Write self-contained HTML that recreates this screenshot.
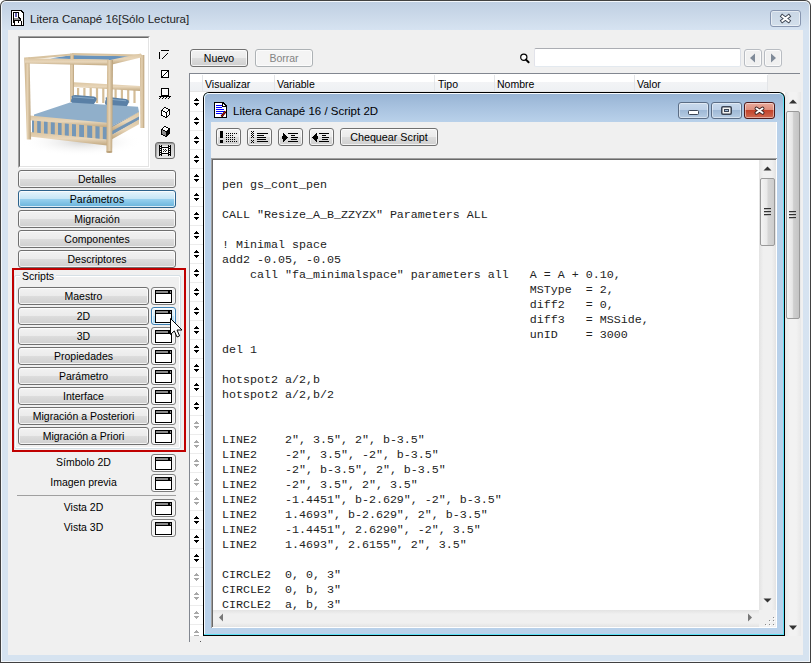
<!DOCTYPE html><html><head><meta charset="utf-8"><style>html,body{margin:0;padding:0;}body{width:811px;height:663px;position:relative;overflow:hidden;background:#fff;font-family:"Liberation Sans", sans-serif;}.code{font-family:"Liberation Mono", monospace;}</style></head><body>
<div style="position:absolute;left:0px;top:0px;width:811px;height:663px;background:#414141;border-radius:6px 6px 0 0;"></div>
<div style="position:absolute;left:1px;top:1px;width:809px;height:661px;background:#f3f7fb;border-radius:5px 5px 0 0;"></div>
<div style="position:absolute;left:2px;top:2px;width:807px;height:659px;background:linear-gradient(#bfcfe2 0px,#cbd9e9 14px,#d6e3f1 28px,#d6e3f0 100%);border-radius:4px 4px 0 0;"></div>
<div style="position:absolute;left:8px;top:30px;width:795px;height:625px;background:#f0f0f0;"></div>
<svg style="position:absolute;left:11px;top:10px" width="13" height="16" viewBox="0 0 13 16" shape-rendering="crispEdges"><rect x="0" y="0" width="11" height="1" fill="#000"/><rect x="0" y="1" width="1" height="1" fill="#000"/><rect x="1" y="1" width="9" height="1" fill="#fff"/><rect x="10" y="1" width="2" height="1" fill="#000"/><rect x="0" y="2" width="1" height="1" fill="#000"/><rect x="1" y="2" width="1" height="1" fill="#fff"/><rect x="2" y="2" width="6" height="1" fill="#000"/><rect x="8" y="2" width="3" height="1" fill="#fff"/><rect x="11" y="2" width="2" height="1" fill="#000"/><rect x="0" y="3" width="1" height="1" fill="#000"/><rect x="1" y="3" width="1" height="1" fill="#fff"/><rect x="2" y="3" width="1" height="1" fill="#000"/><rect x="3" y="3" width="1" height="1" fill="#fff"/><rect x="4" y="3" width="2" height="1" fill="#6464b4"/><rect x="6" y="3" width="1" height="1" fill="#fff"/><rect x="7" y="3" width="1" height="1" fill="#000"/><rect x="8" y="3" width="4" height="1" fill="#fff"/><rect x="12" y="3" width="1" height="1" fill="#000"/><rect x="0" y="4" width="1" height="1" fill="#000"/><rect x="1" y="4" width="1" height="1" fill="#fff"/><rect x="2" y="4" width="1" height="1" fill="#000"/><rect x="3" y="4" width="1" height="1" fill="#fff"/><rect x="4" y="4" width="2" height="1" fill="#6464b4"/><rect x="6" y="4" width="1" height="1" fill="#fff"/><rect x="7" y="4" width="1" height="1" fill="#000"/><rect x="8" y="4" width="4" height="1" fill="#fff"/><rect x="12" y="4" width="1" height="1" fill="#000"/><rect x="0" y="5" width="1" height="1" fill="#000"/><rect x="1" y="5" width="1" height="1" fill="#fff"/><rect x="2" y="5" width="1" height="1" fill="#000"/><rect x="3" y="5" width="1" height="1" fill="#fff"/><rect x="4" y="5" width="2" height="1" fill="#6464b4"/><rect x="6" y="5" width="1" height="1" fill="#fff"/><rect x="7" y="5" width="1" height="1" fill="#000"/><rect x="8" y="5" width="4" height="1" fill="#fff"/><rect x="12" y="5" width="1" height="1" fill="#000"/><rect x="0" y="6" width="1" height="1" fill="#000"/><rect x="1" y="6" width="1" height="1" fill="#fff"/><rect x="2" y="6" width="1" height="1" fill="#000"/><rect x="3" y="6" width="1" height="1" fill="#fff"/><rect x="4" y="6" width="2" height="1" fill="#6464b4"/><rect x="6" y="6" width="1" height="1" fill="#fff"/><rect x="7" y="6" width="1" height="1" fill="#000"/><rect x="8" y="6" width="4" height="1" fill="#fff"/><rect x="12" y="6" width="1" height="1" fill="#000"/><rect x="0" y="7" width="1" height="1" fill="#000"/><rect x="1" y="7" width="1" height="1" fill="#fff"/><rect x="2" y="7" width="1" height="1" fill="#000"/><rect x="3" y="7" width="4" height="1" fill="#fff"/><rect x="7" y="7" width="2" height="1" fill="#000"/><rect x="9" y="7" width="3" height="1" fill="#fff"/><rect x="12" y="7" width="1" height="1" fill="#000"/><rect x="0" y="8" width="1" height="1" fill="#000"/><rect x="1" y="8" width="1" height="1" fill="#fff"/><rect x="2" y="8" width="1" height="1" fill="#000"/><rect x="3" y="8" width="5" height="1" fill="#8c8c8c"/><rect x="8" y="8" width="2" height="1" fill="#000"/><rect x="10" y="8" width="2" height="1" fill="#fff"/><rect x="12" y="8" width="1" height="1" fill="#000"/><rect x="0" y="9" width="1" height="1" fill="#000"/><rect x="1" y="9" width="1" height="1" fill="#fff"/><rect x="2" y="9" width="1" height="1" fill="#000"/><rect x="3" y="9" width="6" height="1" fill="#8c8c8c"/><rect x="9" y="9" width="1" height="1" fill="#000"/><rect x="10" y="9" width="2" height="1" fill="#fff"/><rect x="12" y="9" width="1" height="1" fill="#000"/><rect x="0" y="10" width="1" height="1" fill="#000"/><rect x="1" y="10" width="1" height="1" fill="#fff"/><rect x="2" y="10" width="8" height="1" fill="#000"/><rect x="10" y="10" width="2" height="1" fill="#fff"/><rect x="12" y="10" width="1" height="1" fill="#000"/><rect x="0" y="11" width="1" height="1" fill="#000"/><rect x="1" y="11" width="1" height="1" fill="#fff"/><rect x="2" y="11" width="2" height="1" fill="#000"/><rect x="4" y="11" width="3" height="1" fill="#fff"/><rect x="7" y="11" width="1" height="1" fill="#000"/><rect x="8" y="11" width="2" height="1" fill="#fff"/><rect x="10" y="11" width="1" height="1" fill="#000"/><rect x="11" y="11" width="1" height="1" fill="#fff"/><rect x="12" y="11" width="1" height="1" fill="#000"/><rect x="0" y="12" width="1" height="1" fill="#000"/><rect x="1" y="12" width="1" height="1" fill="#fff"/><rect x="2" y="12" width="2" height="1" fill="#000"/><rect x="4" y="12" width="3" height="1" fill="#fff"/><rect x="7" y="12" width="1" height="1" fill="#000"/><rect x="8" y="12" width="2" height="1" fill="#fff"/><rect x="10" y="12" width="1" height="1" fill="#000"/><rect x="11" y="12" width="1" height="1" fill="#fff"/><rect x="12" y="12" width="1" height="1" fill="#000"/><rect x="0" y="13" width="1" height="1" fill="#000"/><rect x="1" y="13" width="2" height="1" fill="#fff"/><rect x="3" y="13" width="1" height="1" fill="#000"/><rect x="4" y="13" width="6" height="1" fill="#fff"/><rect x="10" y="13" width="1" height="1" fill="#000"/><rect x="11" y="13" width="1" height="1" fill="#fff"/><rect x="12" y="13" width="1" height="1" fill="#000"/><rect x="0" y="14" width="1" height="1" fill="#000"/><rect x="1" y="14" width="2" height="1" fill="#fff"/><rect x="3" y="14" width="1" height="1" fill="#000"/><rect x="4" y="14" width="6" height="1" fill="#fff"/><rect x="10" y="14" width="1" height="1" fill="#000"/><rect x="11" y="14" width="1" height="1" fill="#fff"/><rect x="12" y="14" width="1" height="1" fill="#000"/><rect x="0" y="15" width="13" height="1" fill="#000"/><rect x="10" y="2" width="1" height="1" fill="#fff"/></svg>
<div style="position:absolute;left:30px;top:14px;font-size:11.5px;line-height:1;white-space:pre;color:#1e1e1e;">Litera Canapé 16[Sólo Lectura]</div>
<div style="position:absolute;left:770px;top:10px;width:31px;height:17px;box-sizing:border-box;border:1px solid #8796b0;border-radius:3px;background:linear-gradient(#c9d6e5,#d3dfeb);box-shadow:inset 0 0 0 1px rgba(255,255,255,0.5);"></div>
<svg style="position:absolute;left:779px;top:13px" width="13" height="11" viewBox="0 0 13 11"><path d="M3.4 3.2L9.6 7.9M9.6 3.2L3.4 7.9" stroke="#3a4250" stroke-width="3.8" fill="none" stroke-linecap="square"/><path d="M3.4 3.2L9.6 7.9M9.6 3.2L3.4 7.9" stroke="#fff" stroke-width="2" fill="none" stroke-linecap="square"/></svg>
<div style="position:absolute;left:18px;top:36px;width:132px;height:132px;box-sizing:border-box;border-style:solid;border-width:1px;border-color:#a0a0a0 #fff #fff #a0a0a0;"></div>
<div style="position:absolute;left:19px;top:37px;width:130px;height:130px;box-sizing:border-box;border-style:solid;border-width:1px;border-color:#696969 #e3e3e3 #e3e3e3 #696969;background:#fff;"></div>
<div style="position:absolute;left:20px;top:38px;width:128px;height:128px;overflow:hidden"><svg width="128" height="128" viewBox="0 0 128 128">
<defs>
<linearGradient id="wv" x1="0" x2="1" y1="0" y2="0"><stop offset="0" stop-color="#c8ae86"/><stop offset="0.45" stop-color="#e6d3b4"/><stop offset="1" stop-color="#b89f78"/></linearGradient>
<linearGradient id="wh" x1="0" x2="0" y1="0" y2="1"><stop offset="0" stop-color="#dcc6a2"/><stop offset="0.5" stop-color="#e8d6ba"/><stop offset="1" stop-color="#c0a77f"/></linearGradient>
<radialGradient id="sh" cx="0.5" cy="0.5" r="0.5"><stop offset="0" stop-color="#d6d6d6"/><stop offset="1" stop-color="#ffffff" stop-opacity="0"/></radialGradient>
</defs>
<ellipse cx="62" cy="104" rx="60" ry="14" fill="url(#sh)"/>
<!-- canopy -->
<path d="M30 20.5L52 17L118 18.5L100 22.5L89 22Z" fill="#6893bc"/>
<!-- back posts -->
<path d="M50.2 15.5H54V64H50.2Z" fill="url(#wv)"/>
<!-- headboard slats -->
<g fill="#d4bd98">
<rect x="57" y="50" width="2.2" height="15"/><rect x="63.3" y="50" width="2.2" height="15"/><rect x="69.6" y="50" width="2.2" height="15"/><rect x="75.9" y="50" width="2.2" height="15"/><rect x="82.2" y="50" width="2.2" height="15"/><rect x="94.5" y="50" width="2.2" height="15"/><rect x="100.8" y="50" width="2.2" height="15"/><rect x="107.1" y="50" width="2.2" height="15"/><rect x="113.4" y="50" width="2.2" height="15"/>
</g>
<!-- headboard rail -->
<path d="M54 44.3L120 48V53L54 49Z" fill="url(#wh)"/>
<!-- back right post -->
<path d="M120 17H124.3V90H120.5Z" fill="url(#wv)"/>
<!-- left side top rail -->
<path d="M6 19.5L52 15.5V17.5L8 21.5Z" fill="#d8c3a0"/>
<!-- top back rail & right rail -->
<path d="M52 15L122 16.5V18.5L52 17.3Z" fill="#d8c3a0"/>
<path d="M90 22L121 15.5V19.5L92 26.5Z" fill="url(#wh)"/>
<!-- pillows -->
<path d="M52 60Q50 57.5 55 57L74 58.5Q78 59.5 76 63L73 67.5L53 65.5Q49.5 64 52 60Z" fill="#5a80a6"/>
<path d="M86 61Q84 59 89 59L106 61Q110 62 108.5 65L106 70L87 68Q83.5 66 86 61Z" fill="#5a80a6"/>
<path d="M53 59L74 60.5" stroke="#86a9c8" stroke-width="1"/>
<path d="M87 61L106 62.8" stroke="#86a9c8" stroke-width="1"/>
<!-- mattress top -->
<path d="M14 76.5L50 64.5L118 68.8L119 74L92 88L14 80Z" fill="#90afca"/>
<!-- mattress front side (seen through slats) -->
<path d="M12 81L87 88V102L12 95Z" fill="#7497b8"/>
<!-- mattress right side -->
<path d="M92 88L119 74V82L92 97Z" fill="#7294b5"/>
<!-- footboard slats -->
<g fill="#d9c29e">
<rect x="14" y="80" width="3.2" height="16"/><rect x="20.8" y="80.5" width="3.2" height="16.5"/><rect x="27.6" y="81.2" width="3.2" height="16.5"/><rect x="34.8" y="82" width="3.2" height="17"/><rect x="41.6" y="82.6" width="3.2" height="17"/><rect x="48.8" y="83.3" width="3.2" height="17"/><rect x="56" y="84" width="3.2" height="17.5"/><rect x="64" y="84.8" width="3.2" height="17.5"/><rect x="72.2" y="85.6" width="3.2" height="17.5"/><rect x="79.6" y="86.3" width="3.2" height="17.5"/>
</g>
<!-- footboard rails -->
<path d="M9.5 77.5L87 84.8V89.3L9.5 82.3Z" fill="url(#wh)"/>
<path d="M9.5 94L87 101.6V107.4L9.5 98.5Z" fill="url(#wh)"/>
<!-- right side rails -->
<path d="M92 89L119 74V78.5L92 93Z" fill="url(#wh)"/>
<path d="M92 96.8L119 81.4V86.2L92 101.2Z" fill="url(#wh)"/>
<!-- front left post -->
<path d="M4.3 19.5H9.6L11.1 101.6H6.8Z" fill="url(#wv)"/>
<!-- top front rail -->
<path d="M5 20.3L89 21.5V27.5L5 25.6Z" fill="url(#wh)"/>
<!-- front right post -->
<path d="M87.2 22H93L92.2 114.2H86.4Z" fill="url(#wv)"/>
<ellipse cx="89.3" cy="114" rx="3" ry="1" fill="#b89f78"/>
</svg>
</div>
<svg style="position:absolute;left:155px;top:44px" width="20" height="60" viewBox="0 0 20 60" shape-rendering="crispEdges"><rect x="6" y="44" width="8" height="8" fill="#fff"/><rect x="6" y="26" width="8" height="8" fill="#fff"/><rect x="6" y="6" width="8" height="1" fill="#000"/><rect x="4" y="8" width="1" height="7" fill="#000"/><rect x="7" y="14" width="1" height="1" fill="#000"/><rect x="8" y="13" width="1" height="1" fill="#000"/><rect x="9" y="12" width="1" height="1" fill="#000"/><rect x="10" y="11" width="1" height="1" fill="#000"/><rect x="11" y="10" width="1" height="1" fill="#000"/><rect x="12" y="9" width="1" height="1" fill="#000"/><rect x="6" y="26" width="8" height="1" fill="#000"/><rect x="6" y="33" width="8" height="1" fill="#000"/><rect x="6" y="26" width="1" height="8" fill="#000"/><rect x="13" y="26" width="1" height="8" fill="#000"/><rect x="7" y="32" width="1" height="1" fill="#000"/><rect x="8" y="31" width="1" height="1" fill="#000"/><rect x="9" y="30" width="1" height="1" fill="#000"/><rect x="10" y="29" width="1" height="1" fill="#000"/><rect x="11" y="28" width="1" height="1" fill="#000"/><rect x="12" y="27" width="1" height="1" fill="#000"/><rect x="6" y="44" width="8" height="1" fill="#000"/><rect x="6" y="51" width="8" height="1" fill="#000"/><rect x="6" y="44" width="1" height="8" fill="#000"/><rect x="13" y="44" width="1" height="8" fill="#000"/><rect x="4" y="52" width="12" height="1" fill="#000"/><rect x="5" y="53" width="1" height="1" fill="#000"/><rect x="4" y="54" width="1" height="1" fill="#000"/><rect x="8" y="53" width="1" height="1" fill="#000"/><rect x="7" y="54" width="1" height="1" fill="#000"/><rect x="11" y="53" width="1" height="1" fill="#000"/><rect x="10" y="54" width="1" height="1" fill="#000"/><rect x="14" y="53" width="1" height="1" fill="#000"/><rect x="13" y="54" width="1" height="1" fill="#000"/></svg>
<svg style="position:absolute;left:161px;top:107px" width="9" height="11" viewBox="0 0 9 11" shape-rendering="crispEdges"><rect x="3" y="0" width="2" height="1" fill="#000"/><rect x="2" y="1" width="1" height="1" fill="#000"/><rect x="3" y="1" width="2" height="1" fill="#fff"/><rect x="5" y="1" width="2" height="1" fill="#000"/><rect x="1" y="2" width="1" height="1" fill="#000"/><rect x="2" y="2" width="5" height="1" fill="#fff"/><rect x="7" y="2" width="2" height="1" fill="#000"/><rect x="0" y="3" width="2" height="1" fill="#000"/><rect x="2" y="3" width="5" height="1" fill="#fff"/><rect x="7" y="3" width="2" height="1" fill="#000"/><rect x="0" y="4" width="1" height="1" fill="#000"/><rect x="1" y="4" width="1" height="1" fill="#fff"/><rect x="2" y="4" width="2" height="1" fill="#000"/><rect x="4" y="4" width="2" height="1" fill="#fff"/><rect x="6" y="4" width="1" height="1" fill="#000"/><rect x="7" y="4" width="1" height="1" fill="#fff"/><rect x="8" y="4" width="1" height="1" fill="#000"/><rect x="0" y="5" width="1" height="1" fill="#000"/><rect x="1" y="5" width="3" height="1" fill="#fff"/><rect x="4" y="5" width="2" height="1" fill="#000"/><rect x="6" y="5" width="2" height="1" fill="#fff"/><rect x="8" y="5" width="1" height="1" fill="#000"/><rect x="0" y="6" width="1" height="1" fill="#000"/><rect x="1" y="6" width="4" height="1" fill="#fff"/><rect x="5" y="6" width="1" height="1" fill="#000"/><rect x="6" y="6" width="2" height="1" fill="#fff"/><rect x="8" y="6" width="1" height="1" fill="#000"/><rect x="0" y="7" width="1" height="1" fill="#000"/><rect x="1" y="7" width="4" height="1" fill="#fff"/><rect x="5" y="7" width="1" height="1" fill="#000"/><rect x="6" y="7" width="2" height="1" fill="#fff"/><rect x="8" y="7" width="1" height="1" fill="#000"/><rect x="0" y="8" width="2" height="1" fill="#000"/><rect x="2" y="8" width="3" height="1" fill="#fff"/><rect x="5" y="8" width="1" height="1" fill="#000"/><rect x="6" y="8" width="1" height="1" fill="#fff"/><rect x="7" y="8" width="1" height="1" fill="#000"/><rect x="2" y="9" width="2" height="1" fill="#000"/><rect x="4" y="9" width="1" height="1" fill="#fff"/><rect x="5" y="9" width="2" height="1" fill="#000"/><rect x="4" y="10" width="2" height="1" fill="#000"/></svg>
<svg style="position:absolute;left:161px;top:126px" width="9" height="11" viewBox="0 0 9 11" shape-rendering="crispEdges"><rect x="3" y="0" width="2" height="1" fill="#000"/><rect x="2" y="1" width="1" height="1" fill="#000"/><rect x="3" y="1" width="2" height="1" fill="#fff"/><rect x="5" y="1" width="2" height="1" fill="#000"/><rect x="1" y="2" width="1" height="1" fill="#000"/><rect x="2" y="2" width="5" height="1" fill="#fff"/><rect x="7" y="2" width="2" height="1" fill="#000"/><rect x="0" y="3" width="2" height="1" fill="#000"/><rect x="2" y="3" width="5" height="1" fill="#fff"/><rect x="7" y="3" width="2" height="1" fill="#000"/><rect x="0" y="4" width="1" height="1" fill="#000"/><rect x="1" y="4" width="1" height="1" fill="#8a8a8a"/><rect x="2" y="4" width="2" height="1" fill="#000"/><rect x="4" y="4" width="2" height="1" fill="#fff"/><rect x="6" y="4" width="3" height="1" fill="#000"/><rect x="0" y="5" width="1" height="1" fill="#000"/><rect x="1" y="5" width="3" height="1" fill="#8a8a8a"/><rect x="4" y="5" width="5" height="1" fill="#000"/><rect x="0" y="6" width="1" height="1" fill="#000"/><rect x="1" y="6" width="4" height="1" fill="#8a8a8a"/><rect x="5" y="6" width="4" height="1" fill="#000"/><rect x="0" y="7" width="1" height="1" fill="#000"/><rect x="1" y="7" width="4" height="1" fill="#8a8a8a"/><rect x="5" y="7" width="4" height="1" fill="#000"/><rect x="0" y="8" width="2" height="1" fill="#000"/><rect x="2" y="8" width="3" height="1" fill="#8a8a8a"/><rect x="5" y="8" width="3" height="1" fill="#000"/><rect x="2" y="9" width="2" height="1" fill="#000"/><rect x="4" y="9" width="1" height="1" fill="#8a8a8a"/><rect x="5" y="9" width="2" height="1" fill="#000"/><rect x="4" y="10" width="2" height="1" fill="#000"/></svg>
<div style="position:absolute;left:155px;top:142px;width:20px;height:17px;box-sizing:border-box;border:1px solid #6b6b6b;border-radius:3px;background:linear-gradient(#c8c8c8,#e6e6e6);box-shadow:inset 1px 1px 1px rgba(0,0,0,0.25);"></div>
<svg style="position:absolute;left:159px;top:145px" width="12" height="11" viewBox="0 0 12 11" shape-rendering="crispEdges"><rect x="0" y="0" width="3" height="11" fill="#000"/><rect x="9" y="0" width="3" height="11" fill="#000"/><rect x="1" y="2" width="1" height="1" fill="#fff"/><rect x="1" y="4" width="1" height="1" fill="#fff"/><rect x="1" y="6" width="1" height="1" fill="#fff"/><rect x="1" y="8" width="1" height="1" fill="#fff"/><rect x="10" y="2" width="1" height="1" fill="#fff"/><rect x="10" y="4" width="1" height="1" fill="#fff"/><rect x="10" y="6" width="1" height="1" fill="#fff"/><rect x="10" y="8" width="1" height="1" fill="#fff"/><rect x="1" y="0" width="1" height="1" fill="#ddd"/><rect x="10" y="0" width="1" height="1" fill="#ddd"/><rect x="1" y="10" width="1" height="1" fill="#ddd"/><rect x="10" y="10" width="1" height="1" fill="#ddd"/><rect x="3" y="1" width="6" height="1" fill="#f4f4f4"/><rect x="3" y="9" width="6" height="1" fill="#f4f4f4"/><rect x="3" y="2" width="6" height="1" fill="#000"/><rect x="3" y="8" width="6" height="1" fill="#000"/><rect x="3" y="3" width="6" height="5" fill="#fff"/><rect x="4" y="4" width="1" height="1" fill="#222"/><rect x="6" y="4" width="1" height="1" fill="#222"/><rect x="5" y="5" width="1" height="1" fill="#444"/><rect x="7" y="5" width="1" height="1" fill="#222"/><rect x="4" y="6" width="1" height="1" fill="#222"/><rect x="6" y="6" width="1" height="1" fill="#222"/></svg>
<div style="position:absolute;left:18px;top:170px;width:158px;height:18px;box-sizing:border-box;border:1px solid #707070;background:linear-gradient(#f2f2f2 0%,#ebebeb 50%,#dddddd 50%,#cfcfcf 100%);border-radius:3px;box-shadow:inset 0 0 0 1px rgba(255,255,255,0.75);"></div>
<div style="position:absolute;left:18px;top:174.25px;width:158px;text-align:center;font-size:10.5px;line-height:1;white-space:pre;color:#000;">Detalles</div>
<div style="position:absolute;left:18px;top:190px;width:158px;height:18px;box-sizing:border-box;border:1px solid #2c628b;background:linear-gradient(#e5f4fc 0%,#c4e5f6 50%,#98d1ef 50%,#68b3db 100%);border-radius:3px;box-shadow:inset 0 0 0 1px rgba(255,255,255,0.75);"></div>
<div style="position:absolute;left:18px;top:194.25px;width:158px;text-align:center;font-size:10.5px;line-height:1;white-space:pre;color:#000;">Parámetros</div>
<div style="position:absolute;left:18px;top:210px;width:158px;height:18px;box-sizing:border-box;border:1px solid #707070;background:linear-gradient(#f2f2f2 0%,#ebebeb 50%,#dddddd 50%,#cfcfcf 100%);border-radius:3px;box-shadow:inset 0 0 0 1px rgba(255,255,255,0.75);"></div>
<div style="position:absolute;left:18px;top:214.25px;width:158px;text-align:center;font-size:10.5px;line-height:1;white-space:pre;color:#000;">Migración</div>
<div style="position:absolute;left:18px;top:230px;width:158px;height:18px;box-sizing:border-box;border:1px solid #707070;background:linear-gradient(#f2f2f2 0%,#ebebeb 50%,#dddddd 50%,#cfcfcf 100%);border-radius:3px;box-shadow:inset 0 0 0 1px rgba(255,255,255,0.75);"></div>
<div style="position:absolute;left:18px;top:234.25px;width:158px;text-align:center;font-size:10.5px;line-height:1;white-space:pre;color:#000;">Componentes</div>
<div style="position:absolute;left:18px;top:250px;width:158px;height:18px;box-sizing:border-box;border:1px solid #707070;background:linear-gradient(#f2f2f2 0%,#ebebeb 50%,#dddddd 50%,#cfcfcf 100%);border-radius:3px;box-shadow:inset 0 0 0 1px rgba(255,255,255,0.75);"></div>
<div style="position:absolute;left:18px;top:254.25px;width:158px;text-align:center;font-size:10.5px;line-height:1;white-space:pre;color:#000;">Descriptores</div>
<div style="position:absolute;left:12px;top:268px;width:174px;height:184px;box-sizing:border-box;border:2px solid #c00000;"></div>
<div style="position:absolute;left:14px;top:275px;width:167px;height:174px;box-sizing:border-box;border:1px solid #d5dfe5;border-radius:2px;box-shadow:inset 0 0 0 1px #fff;"></div>
<div style="position:absolute;left:20px;top:270px;width:36px;height:12px;background:#f0f0f0;"></div>
<div style="position:absolute;left:22px;top:271px;font-size:10.5px;line-height:1;white-space:pre;color:#000;">Scripts</div>
<div style="position:absolute;left:18px;top:287px;width:131px;height:18px;box-sizing:border-box;border:1px solid #707070;background:linear-gradient(#f2f2f2 0%,#ebebeb 50%,#dddddd 50%,#cfcfcf 100%);border-radius:3px;box-shadow:inset 0 0 0 1px rgba(255,255,255,0.75);"></div>
<div style="position:absolute;left:18px;top:291.25px;width:131px;text-align:center;font-size:10.5px;line-height:1;white-space:pre;color:#000;">Maestro</div>
<div style="position:absolute;left:151px;top:287px;width:25px;height:18px;box-sizing:border-box;border:1px solid #7d7d7d;background:linear-gradient(90deg,#e6e6e6 0,#f7f7f7 3px,#f7f7f7 calc(100% - 3px),#e6e6e6 100%);border-radius:3px;box-shadow:inset 0 0 0 1px rgba(255,255,255,0.75);"></div>
<svg style="position:absolute;left:155px;top:290px" width="17" height="13" viewBox="0 0 17 13" shape-rendering="crispEdges"><rect x="0" y="0" width="17" height="13" fill="#000"/><rect x="1" y="4" width="15" height="8" fill="#fff"/><rect x="1" y="1" width="12" height="2" fill="#888"/><rect x="15" y="1" width="1" height="2" fill="#888"/></svg>
<div style="position:absolute;left:18px;top:307px;width:131px;height:18px;box-sizing:border-box;border:1px solid #707070;background:linear-gradient(#f2f2f2 0%,#ebebeb 50%,#dddddd 50%,#cfcfcf 100%);border-radius:3px;box-shadow:inset 0 0 0 1px rgba(255,255,255,0.75);"></div>
<div style="position:absolute;left:18px;top:311.25px;width:131px;text-align:center;font-size:10.5px;line-height:1;white-space:pre;color:#000;">2D</div>
<div style="position:absolute;left:151px;top:307px;width:25px;height:18px;box-sizing:border-box;border:1px solid #3c7fb1;background:linear-gradient(#eaf6fd 0%,#d9f0fc 50%,#bee6fd 50%,#a7d9f5 100%);border-radius:3px;box-shadow:inset 0 0 0 1px rgba(255,255,255,0.75);"></div>
<svg style="position:absolute;left:155px;top:310px" width="17" height="13" viewBox="0 0 17 13" shape-rendering="crispEdges"><rect x="0" y="0" width="17" height="13" fill="#000"/><rect x="1" y="4" width="15" height="8" fill="#fff"/><rect x="1" y="1" width="12" height="2" fill="#888"/><rect x="15" y="1" width="1" height="2" fill="#888"/></svg>
<div style="position:absolute;left:18px;top:327px;width:131px;height:18px;box-sizing:border-box;border:1px solid #707070;background:linear-gradient(#f2f2f2 0%,#ebebeb 50%,#dddddd 50%,#cfcfcf 100%);border-radius:3px;box-shadow:inset 0 0 0 1px rgba(255,255,255,0.75);"></div>
<div style="position:absolute;left:18px;top:331.25px;width:131px;text-align:center;font-size:10.5px;line-height:1;white-space:pre;color:#000;">3D</div>
<div style="position:absolute;left:151px;top:327px;width:25px;height:18px;box-sizing:border-box;border:1px solid #7d7d7d;background:linear-gradient(90deg,#e6e6e6 0,#f7f7f7 3px,#f7f7f7 calc(100% - 3px),#e6e6e6 100%);border-radius:3px;box-shadow:inset 0 0 0 1px rgba(255,255,255,0.75);"></div>
<svg style="position:absolute;left:155px;top:330px" width="17" height="13" viewBox="0 0 17 13" shape-rendering="crispEdges"><rect x="0" y="0" width="17" height="13" fill="#000"/><rect x="1" y="4" width="15" height="8" fill="#fff"/><rect x="1" y="1" width="12" height="2" fill="#888"/><rect x="15" y="1" width="1" height="2" fill="#888"/></svg>
<div style="position:absolute;left:18px;top:347px;width:131px;height:18px;box-sizing:border-box;border:1px solid #707070;background:linear-gradient(#f2f2f2 0%,#ebebeb 50%,#dddddd 50%,#cfcfcf 100%);border-radius:3px;box-shadow:inset 0 0 0 1px rgba(255,255,255,0.75);"></div>
<div style="position:absolute;left:18px;top:351.25px;width:131px;text-align:center;font-size:10.5px;line-height:1;white-space:pre;color:#000;">Propiedades</div>
<div style="position:absolute;left:151px;top:347px;width:25px;height:18px;box-sizing:border-box;border:1px solid #7d7d7d;background:linear-gradient(90deg,#e6e6e6 0,#f7f7f7 3px,#f7f7f7 calc(100% - 3px),#e6e6e6 100%);border-radius:3px;box-shadow:inset 0 0 0 1px rgba(255,255,255,0.75);"></div>
<svg style="position:absolute;left:155px;top:350px" width="17" height="13" viewBox="0 0 17 13" shape-rendering="crispEdges"><rect x="0" y="0" width="17" height="13" fill="#000"/><rect x="1" y="4" width="15" height="8" fill="#fff"/><rect x="1" y="1" width="12" height="2" fill="#888"/><rect x="15" y="1" width="1" height="2" fill="#888"/></svg>
<div style="position:absolute;left:18px;top:367px;width:131px;height:18px;box-sizing:border-box;border:1px solid #707070;background:linear-gradient(#f2f2f2 0%,#ebebeb 50%,#dddddd 50%,#cfcfcf 100%);border-radius:3px;box-shadow:inset 0 0 0 1px rgba(255,255,255,0.75);"></div>
<div style="position:absolute;left:18px;top:371.25px;width:131px;text-align:center;font-size:10.5px;line-height:1;white-space:pre;color:#000;">Parámetro</div>
<div style="position:absolute;left:151px;top:367px;width:25px;height:18px;box-sizing:border-box;border:1px solid #7d7d7d;background:linear-gradient(90deg,#e6e6e6 0,#f7f7f7 3px,#f7f7f7 calc(100% - 3px),#e6e6e6 100%);border-radius:3px;box-shadow:inset 0 0 0 1px rgba(255,255,255,0.75);"></div>
<svg style="position:absolute;left:155px;top:370px" width="17" height="13" viewBox="0 0 17 13" shape-rendering="crispEdges"><rect x="0" y="0" width="17" height="13" fill="#000"/><rect x="1" y="4" width="15" height="8" fill="#fff"/><rect x="1" y="1" width="12" height="2" fill="#888"/><rect x="15" y="1" width="1" height="2" fill="#888"/></svg>
<div style="position:absolute;left:18px;top:387px;width:131px;height:18px;box-sizing:border-box;border:1px solid #707070;background:linear-gradient(#f2f2f2 0%,#ebebeb 50%,#dddddd 50%,#cfcfcf 100%);border-radius:3px;box-shadow:inset 0 0 0 1px rgba(255,255,255,0.75);"></div>
<div style="position:absolute;left:18px;top:391.25px;width:131px;text-align:center;font-size:10.5px;line-height:1;white-space:pre;color:#000;">Interface</div>
<div style="position:absolute;left:151px;top:387px;width:25px;height:18px;box-sizing:border-box;border:1px solid #7d7d7d;background:linear-gradient(90deg,#e6e6e6 0,#f7f7f7 3px,#f7f7f7 calc(100% - 3px),#e6e6e6 100%);border-radius:3px;box-shadow:inset 0 0 0 1px rgba(255,255,255,0.75);"></div>
<svg style="position:absolute;left:155px;top:390px" width="17" height="13" viewBox="0 0 17 13" shape-rendering="crispEdges"><rect x="0" y="0" width="17" height="13" fill="#000"/><rect x="1" y="4" width="15" height="8" fill="#fff"/><rect x="1" y="1" width="12" height="2" fill="#888"/><rect x="15" y="1" width="1" height="2" fill="#888"/></svg>
<div style="position:absolute;left:18px;top:407px;width:131px;height:18px;box-sizing:border-box;border:1px solid #707070;background:linear-gradient(#f2f2f2 0%,#ebebeb 50%,#dddddd 50%,#cfcfcf 100%);border-radius:3px;box-shadow:inset 0 0 0 1px rgba(255,255,255,0.75);"></div>
<div style="position:absolute;left:18px;top:411.25px;width:131px;text-align:center;font-size:10.5px;line-height:1;white-space:pre;color:#000;">Migración a Posteriori</div>
<div style="position:absolute;left:151px;top:407px;width:25px;height:18px;box-sizing:border-box;border:1px solid #7d7d7d;background:linear-gradient(90deg,#e6e6e6 0,#f7f7f7 3px,#f7f7f7 calc(100% - 3px),#e6e6e6 100%);border-radius:3px;box-shadow:inset 0 0 0 1px rgba(255,255,255,0.75);"></div>
<svg style="position:absolute;left:155px;top:410px" width="17" height="13" viewBox="0 0 17 13" shape-rendering="crispEdges"><rect x="0" y="0" width="17" height="13" fill="#000"/><rect x="1" y="4" width="15" height="8" fill="#fff"/><rect x="1" y="1" width="12" height="2" fill="#888"/><rect x="15" y="1" width="1" height="2" fill="#888"/></svg>
<div style="position:absolute;left:18px;top:427px;width:131px;height:18px;box-sizing:border-box;border:1px solid #707070;background:linear-gradient(#f2f2f2 0%,#ebebeb 50%,#dddddd 50%,#cfcfcf 100%);border-radius:3px;box-shadow:inset 0 0 0 1px rgba(255,255,255,0.75);"></div>
<div style="position:absolute;left:18px;top:431.25px;width:131px;text-align:center;font-size:10.5px;line-height:1;white-space:pre;color:#000;">Migración a Priori</div>
<div style="position:absolute;left:151px;top:427px;width:25px;height:18px;box-sizing:border-box;border:1px solid #7d7d7d;background:linear-gradient(90deg,#e6e6e6 0,#f7f7f7 3px,#f7f7f7 calc(100% - 3px),#e6e6e6 100%);border-radius:3px;box-shadow:inset 0 0 0 1px rgba(255,255,255,0.75);"></div>
<svg style="position:absolute;left:155px;top:430px" width="17" height="13" viewBox="0 0 17 13" shape-rendering="crispEdges"><rect x="0" y="0" width="17" height="13" fill="#000"/><rect x="1" y="4" width="15" height="8" fill="#fff"/><rect x="1" y="1" width="12" height="2" fill="#888"/><rect x="15" y="1" width="1" height="2" fill="#888"/></svg>
<div style="position:absolute;left:18px;top:457px;width:131px;text-align:center;font-size:10.5px;line-height:1;white-space:pre;color:#000;">Símbolo 2D</div>
<div style="position:absolute;left:151px;top:454px;width:25px;height:18px;box-sizing:border-box;border:1px solid #7d7d7d;background:linear-gradient(90deg,#e6e6e6 0,#f7f7f7 3px,#f7f7f7 calc(100% - 3px),#e6e6e6 100%);border-radius:3px;box-shadow:inset 0 0 0 1px rgba(255,255,255,0.75);"></div>
<svg style="position:absolute;left:155px;top:457px" width="17" height="13" viewBox="0 0 17 13" shape-rendering="crispEdges"><rect x="0" y="0" width="17" height="13" fill="#000"/><rect x="1" y="4" width="15" height="8" fill="#fff"/><rect x="1" y="1" width="12" height="2" fill="#888"/><rect x="15" y="1" width="1" height="2" fill="#888"/></svg>
<div style="position:absolute;left:18px;top:477px;width:131px;text-align:center;font-size:10.5px;line-height:1;white-space:pre;color:#000;">Imagen previa</div>
<div style="position:absolute;left:151px;top:474px;width:25px;height:18px;box-sizing:border-box;border:1px solid #7d7d7d;background:linear-gradient(90deg,#e6e6e6 0,#f7f7f7 3px,#f7f7f7 calc(100% - 3px),#e6e6e6 100%);border-radius:3px;box-shadow:inset 0 0 0 1px rgba(255,255,255,0.75);"></div>
<svg style="position:absolute;left:155px;top:477px" width="17" height="13" viewBox="0 0 17 13" shape-rendering="crispEdges"><rect x="0" y="0" width="17" height="13" fill="#000"/><rect x="1" y="4" width="15" height="8" fill="#fff"/><rect x="1" y="1" width="12" height="2" fill="#888"/><rect x="15" y="1" width="1" height="2" fill="#888"/></svg>
<div style="position:absolute;left:17px;top:495px;width:159px;height:1px;background:#a0a0a0;"></div>
<div style="position:absolute;left:18px;top:502px;width:131px;text-align:center;font-size:10.5px;line-height:1;white-space:pre;color:#000;">Vista 2D</div>
<div style="position:absolute;left:151px;top:499px;width:25px;height:18px;box-sizing:border-box;border:1px solid #7d7d7d;background:linear-gradient(90deg,#e6e6e6 0,#f7f7f7 3px,#f7f7f7 calc(100% - 3px),#e6e6e6 100%);border-radius:3px;box-shadow:inset 0 0 0 1px rgba(255,255,255,0.75);"></div>
<svg style="position:absolute;left:155px;top:502px" width="17" height="13" viewBox="0 0 17 13" shape-rendering="crispEdges"><rect x="0" y="0" width="17" height="13" fill="#000"/><rect x="1" y="4" width="15" height="8" fill="#fff"/><rect x="1" y="1" width="12" height="2" fill="#888"/><rect x="15" y="1" width="1" height="2" fill="#888"/></svg>
<div style="position:absolute;left:18px;top:522px;width:131px;text-align:center;font-size:10.5px;line-height:1;white-space:pre;color:#000;">Vista 3D</div>
<div style="position:absolute;left:151px;top:519px;width:25px;height:18px;box-sizing:border-box;border:1px solid #7d7d7d;background:linear-gradient(90deg,#e6e6e6 0,#f7f7f7 3px,#f7f7f7 calc(100% - 3px),#e6e6e6 100%);border-radius:3px;box-shadow:inset 0 0 0 1px rgba(255,255,255,0.75);"></div>
<svg style="position:absolute;left:155px;top:522px" width="17" height="13" viewBox="0 0 17 13" shape-rendering="crispEdges"><rect x="0" y="0" width="17" height="13" fill="#000"/><rect x="1" y="4" width="15" height="8" fill="#fff"/><rect x="1" y="1" width="12" height="2" fill="#888"/><rect x="15" y="1" width="1" height="2" fill="#888"/></svg>
<div style="position:absolute;left:190px;top:49px;width:58px;height:18px;box-sizing:border-box;border:1px solid #707070;background:linear-gradient(#f2f2f2 0%,#ebebeb 50%,#dddddd 50%,#cfcfcf 100%);border-radius:3px;box-shadow:inset 0 0 0 1px rgba(255,255,255,0.75);"></div>
<div style="position:absolute;left:190px;top:53.25px;width:58px;text-align:center;font-size:10.5px;line-height:1;white-space:pre;color:#000;">Nuevo</div>
<div style="position:absolute;left:255px;top:49px;width:58px;height:18px;box-sizing:border-box;border:1px solid #adb2b5;background:#f4f4f4;border-radius:3px;box-shadow:inset 0 0 0 1px rgba(255,255,255,0.75);"></div>
<div style="position:absolute;left:255px;top:53.25px;width:58px;text-align:center;font-size:10.5px;line-height:1;white-space:pre;color:#838383;">Borrar</div>
<svg style="position:absolute;left:518px;top:52px" width="14" height="14" viewBox="0 0 14 14"><circle cx="5.8" cy="5.3" r="3.1" fill="#fff" stroke="#000" stroke-width="1.2"/><path d="M8 7.6L10.6 10.2" stroke="#000" stroke-width="2" stroke-linecap="round"/></svg>
<div style="position:absolute;left:534px;top:48px;width:207px;height:19px;box-sizing:border-box;border:1px solid;border-color:#abadb3 #dbdfe6 #e3e9ef #e2e3ea;border-radius:2px;background:#fff;"></div>
<div style="position:absolute;left:744px;top:49px;width:18px;height:18px;box-sizing:border-box;border:1px solid #b8bcc2;border-radius:3px;background:#f0f0f0;box-shadow:inset 0 0 0 1px #fafafa;"></div>
<svg style="position:absolute;left:749px;top:53px" width="8" height="10"><path d="M6 0.5V9.5L1 5Z" fill="#7f8a98"/></svg>
<div style="position:absolute;left:764px;top:49px;width:18px;height:18px;box-sizing:border-box;border:1px solid #b8bcc2;border-radius:3px;background:#f0f0f0;box-shadow:inset 0 0 0 1px #fafafa;"></div>
<svg style="position:absolute;left:770px;top:53px" width="8" height="10"><path d="M1 0.5V9.5L6 5Z" fill="#7f8a98"/></svg>
<div style="position:absolute;left:189px;top:73px;width:611px;height:1px;background:#828790;"></div>
<div style="position:absolute;left:189px;top:73px;width:1px;height:569px;background:#828790;"></div>
<div style="position:absolute;left:190px;top:74px;width:578px;height:18px;background:linear-gradient(#ffffff 0,#ffffff 8px,#f3f4f6 8px,#eef0f3 100%);"></div>
<div style="position:absolute;left:190px;top:91px;width:579px;height:1px;background:#e5e5e5;"></div>
<div style="position:absolute;left:202px;top:75px;width:1px;height:16px;background:#e3e5e8;"></div>
<div style="position:absolute;left:274px;top:75px;width:1px;height:16px;background:#e3e5e8;"></div>
<div style="position:absolute;left:434px;top:75px;width:1px;height:16px;background:#e3e5e8;"></div>
<div style="position:absolute;left:494px;top:75px;width:1px;height:16px;background:#e3e5e8;"></div>
<div style="position:absolute;left:634px;top:75px;width:1px;height:16px;background:#e3e5e8;"></div>
<div style="position:absolute;left:767px;top:75px;width:1px;height:16px;background:#e3e5e8;"></div>
<div style="position:absolute;left:205px;top:79px;font-size:10.5px;line-height:1;white-space:pre;color:#000;">Visualizar</div>
<div style="position:absolute;left:277px;top:79px;font-size:10.5px;line-height:1;white-space:pre;color:#000;">Variable</div>
<div style="position:absolute;left:438px;top:79px;font-size:10.5px;line-height:1;white-space:pre;color:#000;">Tipo</div>
<div style="position:absolute;left:497px;top:79px;font-size:10.5px;line-height:1;white-space:pre;color:#000;">Nombre</div>
<div style="position:absolute;left:637px;top:79px;font-size:10.5px;line-height:1;white-space:pre;color:#000;">Valor</div>
<div style="position:absolute;left:190px;top:92px;width:595px;height:544px;background:#fff;"></div>
<div style="position:absolute;left:190px;top:111px;width:13px;height:1px;background:#ececec;"></div>
<svg style="position:absolute;left:194px;top:98px" width="5" height="8" viewBox="0 0 5 8" shape-rendering="crispEdges"><path d="M2 0H3V1H4V2H5V3H0V2H1V1H2Z" fill="#000"/><path d="M0 5H5V6H4V7H3V8H2V7H1V6H0Z" fill="#000"/></svg>
<div style="position:absolute;left:190px;top:130px;width:13px;height:1px;background:#ececec;"></div>
<svg style="position:absolute;left:194px;top:117px" width="5" height="8" viewBox="0 0 5 8" shape-rendering="crispEdges"><path d="M2 0H3V1H4V2H5V3H0V2H1V1H2Z" fill="#000"/><path d="M0 5H5V6H4V7H3V8H2V7H1V6H0Z" fill="#000"/></svg>
<div style="position:absolute;left:190px;top:149px;width:13px;height:1px;background:#ececec;"></div>
<svg style="position:absolute;left:194px;top:136px" width="5" height="8" viewBox="0 0 5 8" shape-rendering="crispEdges"><path d="M2 0H3V1H4V2H5V3H0V2H1V1H2Z" fill="#000"/><path d="M0 5H5V6H4V7H3V8H2V7H1V6H0Z" fill="#000"/></svg>
<div style="position:absolute;left:190px;top:168px;width:13px;height:1px;background:#ececec;"></div>
<svg style="position:absolute;left:194px;top:155px" width="5" height="8" viewBox="0 0 5 8" shape-rendering="crispEdges"><path d="M2 0H3V1H4V2H5V3H0V2H1V1H2Z" fill="#000"/><path d="M0 5H5V6H4V7H3V8H2V7H1V6H0Z" fill="#000"/></svg>
<div style="position:absolute;left:190px;top:187px;width:13px;height:1px;background:#ececec;"></div>
<svg style="position:absolute;left:194px;top:174px" width="5" height="8" viewBox="0 0 5 8" shape-rendering="crispEdges"><path d="M2 0H3V1H4V2H5V3H0V2H1V1H2Z" fill="#000"/><path d="M0 5H5V6H4V7H3V8H2V7H1V6H0Z" fill="#000"/></svg>
<div style="position:absolute;left:190px;top:206px;width:13px;height:1px;background:#ececec;"></div>
<svg style="position:absolute;left:194px;top:193px" width="5" height="8" viewBox="0 0 5 8" shape-rendering="crispEdges"><path d="M2 0H3V1H4V2H5V3H0V2H1V1H2Z" fill="#000"/><path d="M0 5H5V6H4V7H3V8H2V7H1V6H0Z" fill="#000"/></svg>
<div style="position:absolute;left:190px;top:225px;width:13px;height:1px;background:#ececec;"></div>
<svg style="position:absolute;left:194px;top:212px" width="5" height="8" viewBox="0 0 5 8" shape-rendering="crispEdges"><path d="M2 0H3V1H4V2H5V3H0V2H1V1H2Z" fill="#000"/><path d="M0 5H5V6H4V7H3V8H2V7H1V6H0Z" fill="#000"/></svg>
<div style="position:absolute;left:190px;top:244px;width:13px;height:1px;background:#ececec;"></div>
<svg style="position:absolute;left:194px;top:231px" width="5" height="8" viewBox="0 0 5 8" shape-rendering="crispEdges"><path d="M2 0H3V1H4V2H5V3H0V2H1V1H2Z" fill="#000"/><path d="M0 5H5V6H4V7H3V8H2V7H1V6H0Z" fill="#000"/></svg>
<div style="position:absolute;left:190px;top:263px;width:13px;height:1px;background:#ececec;"></div>
<svg style="position:absolute;left:194px;top:250px" width="5" height="8" viewBox="0 0 5 8" shape-rendering="crispEdges"><path d="M2 0H3V1H4V2H5V3H0V2H1V1H2Z" fill="#000"/><path d="M0 5H5V6H4V7H3V8H2V7H1V6H0Z" fill="#000"/></svg>
<div style="position:absolute;left:190px;top:282px;width:13px;height:1px;background:#ececec;"></div>
<svg style="position:absolute;left:194px;top:269px" width="5" height="8" viewBox="0 0 5 8" shape-rendering="crispEdges"><path d="M2 0H3V1H4V2H5V3H0V2H1V1H2Z" fill="#000"/><path d="M0 5H5V6H4V7H3V8H2V7H1V6H0Z" fill="#000"/></svg>
<div style="position:absolute;left:190px;top:301px;width:13px;height:1px;background:#ececec;"></div>
<svg style="position:absolute;left:194px;top:288px" width="5" height="8" viewBox="0 0 5 8" shape-rendering="crispEdges"><path d="M2 0H3V1H4V2H5V3H0V2H1V1H2Z" fill="#000"/><path d="M0 5H5V6H4V7H3V8H2V7H1V6H0Z" fill="#000"/></svg>
<div style="position:absolute;left:190px;top:320px;width:13px;height:1px;background:#ececec;"></div>
<svg style="position:absolute;left:194px;top:307px" width="5" height="8" viewBox="0 0 5 8" shape-rendering="crispEdges"><path d="M2 0H3V1H4V2H5V3H0V2H1V1H2Z" fill="#000"/><path d="M0 5H5V6H4V7H3V8H2V7H1V6H0Z" fill="#000"/></svg>
<div style="position:absolute;left:190px;top:339px;width:13px;height:1px;background:#ececec;"></div>
<svg style="position:absolute;left:194px;top:326px" width="5" height="8" viewBox="0 0 5 8" shape-rendering="crispEdges"><path d="M2 0H3V1H4V2H5V3H0V2H1V1H2Z" fill="#000"/><path d="M0 5H5V6H4V7H3V8H2V7H1V6H0Z" fill="#000"/></svg>
<div style="position:absolute;left:190px;top:358px;width:13px;height:1px;background:#ececec;"></div>
<svg style="position:absolute;left:194px;top:345px" width="5" height="8" viewBox="0 0 5 8" shape-rendering="crispEdges"><path d="M2 0H3V1H4V2H5V3H0V2H1V1H2Z" fill="#000"/><path d="M0 5H5V6H4V7H3V8H2V7H1V6H0Z" fill="#000"/></svg>
<div style="position:absolute;left:190px;top:377px;width:13px;height:1px;background:#ececec;"></div>
<svg style="position:absolute;left:194px;top:364px" width="5" height="8" viewBox="0 0 5 8" shape-rendering="crispEdges"><path d="M2 0H3V1H4V2H5V3H0V2H1V1H2Z" fill="#000"/><path d="M0 5H5V6H4V7H3V8H2V7H1V6H0Z" fill="#000"/></svg>
<div style="position:absolute;left:190px;top:396px;width:13px;height:1px;background:#ececec;"></div>
<svg style="position:absolute;left:194px;top:383px" width="5" height="8" viewBox="0 0 5 8" shape-rendering="crispEdges"><path d="M2 0H3V1H4V2H5V3H0V2H1V1H2Z" fill="#000"/><path d="M0 5H5V6H4V7H3V8H2V7H1V6H0Z" fill="#000"/></svg>
<div style="position:absolute;left:190px;top:415px;width:13px;height:1px;background:#ececec;"></div>
<svg style="position:absolute;left:194px;top:402px" width="5" height="8" viewBox="0 0 5 8" shape-rendering="crispEdges"><path d="M2 0H3V1H4V2H5V3H0V2H1V1H2Z" fill="#000"/><path d="M0 5H5V6H4V7H3V8H2V7H1V6H0Z" fill="#000"/></svg>
<div style="position:absolute;left:190px;top:434px;width:13px;height:1px;background:#ececec;"></div>
<svg style="position:absolute;left:194px;top:421px" width="5" height="8" viewBox="0 0 5 8" shape-rendering="crispEdges"><path d="M2 0H3V1H4V2H5V3H0V2H1V1H2Z" fill="#a8a8a8"/><path d="M0 5H5V6H4V7H3V8H2V7H1V6H0Z" fill="#a8a8a8"/></svg>
<div style="position:absolute;left:190px;top:453px;width:13px;height:1px;background:#ececec;"></div>
<svg style="position:absolute;left:194px;top:440px" width="5" height="8" viewBox="0 0 5 8" shape-rendering="crispEdges"><path d="M2 0H3V1H4V2H5V3H0V2H1V1H2Z" fill="#a8a8a8"/><path d="M0 5H5V6H4V7H3V8H2V7H1V6H0Z" fill="#a8a8a8"/></svg>
<div style="position:absolute;left:190px;top:472px;width:13px;height:1px;background:#ececec;"></div>
<svg style="position:absolute;left:194px;top:459px" width="5" height="8" viewBox="0 0 5 8" shape-rendering="crispEdges"><path d="M2 0H3V1H4V2H5V3H0V2H1V1H2Z" fill="#a8a8a8"/><path d="M0 5H5V6H4V7H3V8H2V7H1V6H0Z" fill="#a8a8a8"/></svg>
<div style="position:absolute;left:190px;top:491px;width:13px;height:1px;background:#ececec;"></div>
<svg style="position:absolute;left:194px;top:478px" width="5" height="8" viewBox="0 0 5 8" shape-rendering="crispEdges"><path d="M2 0H3V1H4V2H5V3H0V2H1V1H2Z" fill="#a8a8a8"/><path d="M0 5H5V6H4V7H3V8H2V7H1V6H0Z" fill="#a8a8a8"/></svg>
<div style="position:absolute;left:190px;top:510px;width:13px;height:1px;background:#ececec;"></div>
<svg style="position:absolute;left:194px;top:497px" width="5" height="8" viewBox="0 0 5 8" shape-rendering="crispEdges"><path d="M2 0H3V1H4V2H5V3H0V2H1V1H2Z" fill="#a8a8a8"/><path d="M0 5H5V6H4V7H3V8H2V7H1V6H0Z" fill="#a8a8a8"/></svg>
<div style="position:absolute;left:190px;top:529px;width:13px;height:1px;background:#ececec;"></div>
<svg style="position:absolute;left:194px;top:516px" width="5" height="8" viewBox="0 0 5 8" shape-rendering="crispEdges"><path d="M2 0H3V1H4V2H5V3H0V2H1V1H2Z" fill="#000"/><path d="M0 5H5V6H4V7H3V8H2V7H1V6H0Z" fill="#000"/></svg>
<div style="position:absolute;left:190px;top:548px;width:13px;height:1px;background:#ececec;"></div>
<svg style="position:absolute;left:194px;top:535px" width="5" height="8" viewBox="0 0 5 8" shape-rendering="crispEdges"><path d="M2 0H3V1H4V2H5V3H0V2H1V1H2Z" fill="#000"/><path d="M0 5H5V6H4V7H3V8H2V7H1V6H0Z" fill="#000"/></svg>
<div style="position:absolute;left:190px;top:567px;width:13px;height:1px;background:#ececec;"></div>
<svg style="position:absolute;left:194px;top:554px" width="5" height="8" viewBox="0 0 5 8" shape-rendering="crispEdges"><path d="M2 0H3V1H4V2H5V3H0V2H1V1H2Z" fill="#000"/><path d="M0 5H5V6H4V7H3V8H2V7H1V6H0Z" fill="#000"/></svg>
<div style="position:absolute;left:190px;top:586px;width:13px;height:1px;background:#ececec;"></div>
<svg style="position:absolute;left:194px;top:573px" width="5" height="8" viewBox="0 0 5 8" shape-rendering="crispEdges"><path d="M2 0H3V1H4V2H5V3H0V2H1V1H2Z" fill="#a8a8a8"/><path d="M0 5H5V6H4V7H3V8H2V7H1V6H0Z" fill="#a8a8a8"/></svg>
<div style="position:absolute;left:190px;top:605px;width:13px;height:1px;background:#ececec;"></div>
<svg style="position:absolute;left:194px;top:592px" width="5" height="8" viewBox="0 0 5 8" shape-rendering="crispEdges"><path d="M2 0H3V1H4V2H5V3H0V2H1V1H2Z" fill="#a8a8a8"/><path d="M0 5H5V6H4V7H3V8H2V7H1V6H0Z" fill="#a8a8a8"/></svg>
<div style="position:absolute;left:190px;top:624px;width:13px;height:1px;background:#ececec;"></div>
<svg style="position:absolute;left:194px;top:611px" width="5" height="8" viewBox="0 0 5 8" shape-rendering="crispEdges"><path d="M2 0H3V1H4V2H5V3H0V2H1V1H2Z" fill="#a8a8a8"/><path d="M0 5H5V6H4V7H3V8H2V7H1V6H0Z" fill="#a8a8a8"/></svg>
<svg style="position:absolute;left:194px;top:630px" width="5" height="8" viewBox="0 0 5 8" shape-rendering="crispEdges"><path d="M2 0H3V1H4V2H5V3H0V2H1V1H2Z" fill="#a8a8a8"/><path d="M0 5H5V6H4V7H3V8H2V7H1V6H0Z" fill="#a8a8a8"/></svg>
<div style="position:absolute;left:190px;top:636px;width:595px;height:6px;background:#f0f0f0;"></div>
<div style="position:absolute;left:200px;top:641px;width:1px;height:1px;background:#555;"></div>
<div style="position:absolute;left:785px;top:92px;width:16px;height:544px;background:linear-gradient(90deg,#e8e8e8,#f2f2f2 30%,#f2f2f2 70%,#e8e8e8);"></div>
<svg style="position:absolute;left:789px;top:99px" width="8" height="5"><path d="M0 4.5L4 0.5L8 4.5Z" fill="#333"/></svg>
<div style="position:absolute;left:786px;top:111px;width:14px;height:208px;box-sizing:border-box;border:1px solid #9a9a9a;border-radius:2px;background:linear-gradient(90deg,#f4f4f4,#e6e6e6 45%,#cfcfcf 55%,#c4c4c4);"></div>
<svg style="position:absolute;left:789px;top:211px" width="7" height="8" shape-rendering="crispEdges"><rect x="0" y="0" width="7" height="1" fill="#333"/><rect x="0" y="3" width="7" height="1" fill="#333"/><rect x="0" y="6" width="7" height="1" fill="#333"/><rect x="0" y="1" width="7" height="1" fill="#bbb"/><rect x="0" y="4" width="7" height="1" fill="#bbb"/><rect x="0" y="7" width="7" height="1" fill="#bbb"/></svg>
<svg style="position:absolute;left:789px;top:625px" width="8" height="6"><path d="M0 0.5L8 0.5L4 5Z" fill="#333"/></svg>
<div style="position:absolute;left:203px;top:92px;width:582px;height:544px;background:#000;border-radius:6px 6px 0 0;"></div>
<div style="position:absolute;left:204px;top:93px;width:580px;height:542px;background:#5be1f5;border-radius:5px 5px 0 0;"></div>
<div style="position:absolute;left:204px;top:93px;width:579px;height:541px;background:#f8fbfe;border-radius:5px 5px 0 0;"></div>
<div style="position:absolute;left:205px;top:94px;width:578px;height:540px;background:linear-gradient(#98b4d4 0px,#a9c3e0 14px,#b9d1ea 28px,#b9d1ea 100%);border-radius:4px 4px 0 0;"></div>
<div style="position:absolute;left:211px;top:122px;width:566px;height:506px;background:#f0f0f0;"></div>
<div style="position:absolute;left:776px;top:122px;width:1px;height:506px;background:#fff;"></div>
<div style="position:absolute;left:211px;top:627px;width:566px;height:1px;background:#fff;"></div>
<svg style="position:absolute;left:214px;top:102px" width="13" height="16" viewBox="0 0 13 16" shape-rendering="crispEdges"><path d="M0 0H9L13 4V16H0Z" fill="#000"/><path d="M1 1H8L12 5V15H1Z" fill="#fff"/><path d="M8.5 0.5V4.5H12.5" fill="none" stroke="#000" stroke-width="1"/><rect x="2" y="3" width="6" height="1" fill="#0000ff"/><rect x="2" y="5" width="6" height="1" fill="#0000ff"/><rect x="2" y="7" width="8" height="1" fill="#0000ff"/><rect x="2" y="9" width="8" height="1" fill="#0000ff"/><rect x="2" y="11" width="6" height="1" fill="#0000ff"/><path d="M7.5 14.5L11.5 9.5" stroke="#000" stroke-width="2.2" shape-rendering="auto"/><path d="M7.5 14.5L11.5 9.5" stroke="#ff0000" stroke-width="1" shape-rendering="auto"/></svg>
<div style="position:absolute;left:233px;top:105.5px;font-size:11.5px;line-height:1;white-space:pre;color:#000;">Litera Canapé 16 / Script 2D</div>
<div style="position:absolute;left:678px;top:102px;width:31px;height:17px;box-sizing:border-box;border:1px solid #5b6d85;background:linear-gradient(#c8d9ec 0%,#bdd0e7 50%,#9fb9d6 50%,#b6cce3 100%);border-radius:3px;box-shadow:inset 0 0 0 1px rgba(255,255,255,0.45);"></div>
<div style="position:absolute;left:711px;top:102px;width:31px;height:17px;box-sizing:border-box;border:1px solid #5b6d85;background:linear-gradient(#c8d9ec 0%,#bdd0e7 50%,#9fb9d6 50%,#b6cce3 100%);border-radius:3px;box-shadow:inset 0 0 0 1px rgba(255,255,255,0.45);"></div>
<div style="position:absolute;left:744px;top:102px;width:31px;height:17px;box-sizing:border-box;border:1px solid #4f1a1a;background:linear-gradient(#e9a99b 0%,#de8c7a 50%,#c3432b 50%,#d06a52 100%);border-radius:3px;box-shadow:inset 0 0 0 1px rgba(255,255,255,0.45);"></div>
<svg style="position:absolute;left:688px;top:109px" width="12" height="7" viewBox="0 0 12 7"><rect x="0.5" y="1.5" width="10" height="4" rx="1" fill="#fff" stroke="#3b4555" stroke-width="1"/></svg>
<svg style="position:absolute;left:721px;top:106px" width="11" height="9" viewBox="0 0 11 9"><rect x="0.75" y="0.75" width="9.5" height="7.5" rx="1.2" fill="#f4f4f2" stroke="#3b4555" stroke-width="1.5"/><rect x="3.5" y="3.5" width="4" height="2" fill="#9fb9d6" stroke="#3b4555" stroke-width="1"/></svg>
<svg style="position:absolute;left:754px;top:106px" width="11" height="10" viewBox="0 0 11 10"><path d="M2.5 2.5L8.5 6.8M8.5 2.5L2.5 6.8" stroke="#3a2020" stroke-width="3.8" fill="none" stroke-linecap="round"/><path d="M2.5 2.5L8.5 6.8M8.5 2.5L2.5 6.8" stroke="#fff" stroke-width="2" fill="none" stroke-linecap="round"/></svg>
<div style="position:absolute;left:216px;top:128px;width:25px;height:18px;box-sizing:border-box;border:1px solid #707070;background:linear-gradient(#f2f2f2 0%,#ebebeb 50%,#dddddd 50%,#cfcfcf 100%);border-radius:3px;box-shadow:inset 0 0 0 1px rgba(255,255,255,0.75);"></div>
<div style="position:absolute;left:247px;top:128px;width:25px;height:18px;box-sizing:border-box;border:1px solid #707070;background:linear-gradient(#f2f2f2 0%,#ebebeb 50%,#dddddd 50%,#cfcfcf 100%);border-radius:3px;box-shadow:inset 0 0 0 1px rgba(255,255,255,0.75);"></div>
<div style="position:absolute;left:278px;top:128px;width:25px;height:18px;box-sizing:border-box;border:1px solid #707070;background:linear-gradient(#f2f2f2 0%,#ebebeb 50%,#dddddd 50%,#cfcfcf 100%);border-radius:3px;box-shadow:inset 0 0 0 1px rgba(255,255,255,0.75);"></div>
<div style="position:absolute;left:309px;top:128px;width:25px;height:18px;box-sizing:border-box;border:1px solid #707070;background:linear-gradient(#f2f2f2 0%,#ebebeb 50%,#dddddd 50%,#cfcfcf 100%);border-radius:3px;box-shadow:inset 0 0 0 1px rgba(255,255,255,0.75);"></div>
<div style="position:absolute;left:340px;top:128px;width:98px;height:18px;box-sizing:border-box;border:1px solid #707070;background:linear-gradient(#f2f2f2 0%,#ebebeb 50%,#dddddd 50%,#cfcfcf 100%);border-radius:3px;box-shadow:inset 0 0 0 1px rgba(255,255,255,0.75);"></div>
<div style="position:absolute;left:340px;top:132.125px;width:98px;text-align:center;font-size:10.75px;line-height:1;white-space:pre;color:#000;">Chequear Script</div>
<svg style="position:absolute;left:216px;top:128px" width="25" height="18" viewBox="0 0 25 18" shape-rendering="crispEdges"><rect x="4" y="3" width="3" height="7" fill="#000"/><rect x="4" y="12" width="3" height="3" fill="#000"/><rect x="10" y="5" width="1" height="1" fill="#000"/><rect x="12" y="5" width="1" height="1" fill="#000"/><rect x="14" y="5" width="1" height="1" fill="#000"/><rect x="16" y="5" width="1" height="1" fill="#000"/><rect x="18" y="5" width="1" height="1" fill="#000"/><rect x="20" y="5" width="1" height="1" fill="#000"/><rect x="10" y="7" width="1" height="1" fill="#000"/><rect x="12" y="7" width="1" height="1" fill="#000"/><rect x="14" y="7" width="1" height="1" fill="#000"/><rect x="16" y="7" width="1" height="1" fill="#000"/><rect x="10" y="9" width="1" height="1" fill="#000"/><rect x="12" y="9" width="1" height="1" fill="#000"/><rect x="14" y="9" width="1" height="1" fill="#000"/><rect x="16" y="9" width="1" height="1" fill="#000"/><rect x="18" y="9" width="1" height="1" fill="#000"/><rect x="10" y="11" width="1" height="1" fill="#000"/><rect x="12" y="11" width="1" height="1" fill="#000"/><rect x="14" y="11" width="1" height="1" fill="#000"/><rect x="16" y="11" width="1" height="1" fill="#000"/><rect x="18" y="11" width="1" height="1" fill="#000"/><rect x="10" y="13" width="1" height="1" fill="#000"/><rect x="12" y="13" width="1" height="1" fill="#000"/><rect x="14" y="13" width="1" height="1" fill="#000"/><rect x="16" y="13" width="1" height="1" fill="#000"/><rect x="18" y="13" width="1" height="1" fill="#000"/><rect x="20" y="13" width="1" height="1" fill="#000"/></svg>
<svg style="position:absolute;left:247px;top:128px" width="25" height="18" viewBox="0 0 25 18"><g shape-rendering="crispEdges"><rect x="4" y="3" width="1" height="1" fill="#000"/><rect x="6" y="3" width="1" height="1" fill="#000"/><rect x="5" y="4" width="1" height="1" fill="#000"/><rect x="4" y="5" width="1" height="1" fill="#000"/><rect x="6" y="5" width="1" height="1" fill="#000"/><rect x="5" y="6" width="1" height="1" fill="#000"/><rect x="4" y="7" width="1" height="1" fill="#000"/><rect x="6" y="7" width="1" height="1" fill="#000"/><rect x="5" y="8" width="1" height="1" fill="#000"/><rect x="4" y="9" width="1" height="1" fill="#000"/><rect x="6" y="9" width="1" height="1" fill="#000"/><rect x="4" y="12" width="1" height="1" fill="#000"/><rect x="6" y="12" width="1" height="1" fill="#000"/><rect x="5" y="13" width="1" height="1" fill="#000"/><rect x="4" y="14" width="1" height="1" fill="#000"/><rect x="6" y="14" width="1" height="1" fill="#000"/></g><g shape-rendering="crispEdges"><rect x="10" y="5" width="11" height="1" fill="#000"/><rect x="10" y="7" width="7" height="1" fill="#000"/><rect x="10" y="9" width="9" height="1" fill="#000"/><rect x="10" y="11" width="9" height="1" fill="#000"/><rect x="10" y="13" width="11" height="1" fill="#000"/></g></svg>
<svg style="position:absolute;left:278px;top:128px" width="25" height="18" viewBox="0 0 25 18" shape-rendering="crispEdges"><rect x="4" y="8" width="1" height="3" fill="#000"/><rect x="5" y="5" width="1" height="9" fill="#000"/><rect x="6" y="6" width="1" height="7" fill="#000"/><rect x="7" y="7" width="1" height="5" fill="#000"/><rect x="8" y="8" width="1" height="3" fill="#000"/><rect x="9" y="9" width="1" height="1" fill="#000"/><rect x="10" y="5" width="10" height="1" fill="#000"/><rect x="13" y="7" width="4" height="1" fill="#000"/><rect x="13" y="9" width="7" height="1" fill="#000"/><rect x="13" y="11" width="6" height="1" fill="#000"/><rect x="10" y="13" width="10" height="1" fill="#000"/></svg>
<svg style="position:absolute;left:309px;top:128px" width="25" height="18" viewBox="0 0 25 18" shape-rendering="crispEdges"><rect x="3" y="9" width="1" height="1" fill="#000"/><rect x="4" y="8" width="1" height="3" fill="#000"/><rect x="5" y="7" width="1" height="5" fill="#000"/><rect x="6" y="6" width="1" height="7" fill="#000"/><rect x="7" y="5" width="1" height="9" fill="#000"/><rect x="8" y="8" width="1" height="3" fill="#000"/><rect x="10" y="5" width="10" height="1" fill="#000"/><rect x="13" y="7" width="4" height="1" fill="#000"/><rect x="13" y="9" width="7" height="1" fill="#000"/><rect x="13" y="11" width="6" height="1" fill="#000"/><rect x="10" y="13" width="10" height="1" fill="#000"/></svg>
<div style="position:absolute;left:211px;top:158px;width:566px;height:1px;background:#a0a0a0;"></div>
<div style="position:absolute;left:211px;top:158px;width:1px;height:470px;background:#a0a0a0;"></div>
<div style="position:absolute;left:212px;top:159px;width:564px;height:1px;background:#696969;"></div>
<div style="position:absolute;left:212px;top:159px;width:1px;height:468px;background:#696969;"></div>
<div style="position:absolute;left:213px;top:160px;width:546px;height:450px;background:#fff;"></div>
<div style="position:absolute;left:213px;top:160px;width:546px;height:450px;overflow:hidden;">
<div class="code" style="position:absolute;left:9px;top:18px;font-size:11.67px;line-height:15px;white-space:pre;color:#222;">pen gs_cont_pen

CALL "Resize_A_B_ZZYZX" Parameters ALL

! Minimal space
add2 -0.05, -0.05
    call "fa_minimalspace" parameters all   A = A + 0.10,
                                            MSType  = 2,
                                            diff2   = 0,
                                            diff3   = MSSide,
                                            unID    = 3000
del 1

hotspot2 a/2,b
hotspot2 a/2,b/2


LINE2    2", 3.5", 2", b-3.5"
LINE2    -2", 3.5", -2", b-3.5"
LINE2    -2", b-3.5", 2", b-3.5"
LINE2    -2", 3.5", 2", 3.5"
LINE2    -1.4451", b-2.629", -2", b-3.5"
LINE2    1.4693", b-2.629", 2", b-3.5"
LINE2    -1.4451", 2.6290", -2", 3.5"
LINE2    1.4693", 2.6155", 2", 3.5"

CIRCLE2  0, 0, 3"
CIRCLE2  0, b, 3"
CIRCLE2  a, b, 3"</div>
</div>
<div style="position:absolute;left:759px;top:160px;width:17px;height:450px;background:linear-gradient(90deg,#e3e3e3,#f0f0f0 25%,#f0f0f0 75%,#e3e3e3);"></div>
<svg style="position:absolute;left:763px;top:166px" width="9" height="5"><path d="M0.5 4.5L4.5 0.5L8.5 4.5Z" fill="#333"/></svg>
<div style="position:absolute;left:760px;top:178px;width:15px;height:68px;box-sizing:border-box;border:1px solid #9a9a9a;border-radius:2px;background:linear-gradient(90deg,#f4f4f4,#e9e9e9 45%,#d6d6d6 55%,#cdcdcd);"></div>
<svg style="position:absolute;left:764px;top:208px" width="7" height="8" shape-rendering="crispEdges"><rect x="0" y="0" width="7" height="1" fill="#333"/><rect x="0" y="3" width="7" height="1" fill="#333"/><rect x="0" y="6" width="7" height="1" fill="#333"/><rect x="0" y="1" width="7" height="1" fill="#bbb"/><rect x="0" y="4" width="7" height="1" fill="#bbb"/><rect x="0" y="7" width="7" height="1" fill="#bbb"/></svg>
<svg style="position:absolute;left:763px;top:598px" width="9" height="5"><path d="M0.5 0.5L8.5 0.5L4.5 4.5Z" fill="#333"/></svg>
<div style="position:absolute;left:213px;top:610px;width:546px;height:17px;background:linear-gradient(#e3e3e3,#f0f0f0 25%,#f0f0f0 75%,#e3e3e3);"></div>
<svg style="position:absolute;left:218px;top:613px" width="6" height="9"><path d="M5 0.5V8.5L1 4.5Z" fill="#777"/></svg>
<svg style="position:absolute;left:747px;top:613px" width="6" height="9"><path d="M1 0.5V8.5L5 4.5Z" fill="#777"/></svg>
<div style="position:absolute;left:759px;top:610px;width:17px;height:17px;background:#f0f0f0;"></div>
<svg style="position:absolute;left:759px;top:610px" width="17" height="17" shape-rendering="crispEdges"><rect x="14" y="7" width="1" height="1" fill="#8a8a8a"/><rect x="15" y="8" width="1" height="1" fill="#fff"/><rect x="10" y="10" width="1" height="1" fill="#8a8a8a"/><rect x="11" y="11" width="1" height="1" fill="#fff"/><rect x="14" y="10" width="1" height="1" fill="#8a8a8a"/><rect x="15" y="11" width="1" height="1" fill="#fff"/><rect x="6" y="14" width="1" height="1" fill="#8a8a8a"/><rect x="7" y="15" width="1" height="1" fill="#fff"/><rect x="10" y="14" width="1" height="1" fill="#8a8a8a"/><rect x="11" y="15" width="1" height="1" fill="#fff"/><rect x="14" y="14" width="1" height="1" fill="#8a8a8a"/><rect x="15" y="15" width="1" height="1" fill="#fff"/></svg>
<svg style="position:absolute;left:170px;top:318px" width="14" height="21" viewBox="0 0 14 21"><path d="M0.5 0.5V16.5L4.3 12.9L7 19L9.6 17.9L7 12H12Z" fill="#fff" stroke="#000" stroke-width="1" stroke-linejoin="miter"/></svg>
</body></html>
